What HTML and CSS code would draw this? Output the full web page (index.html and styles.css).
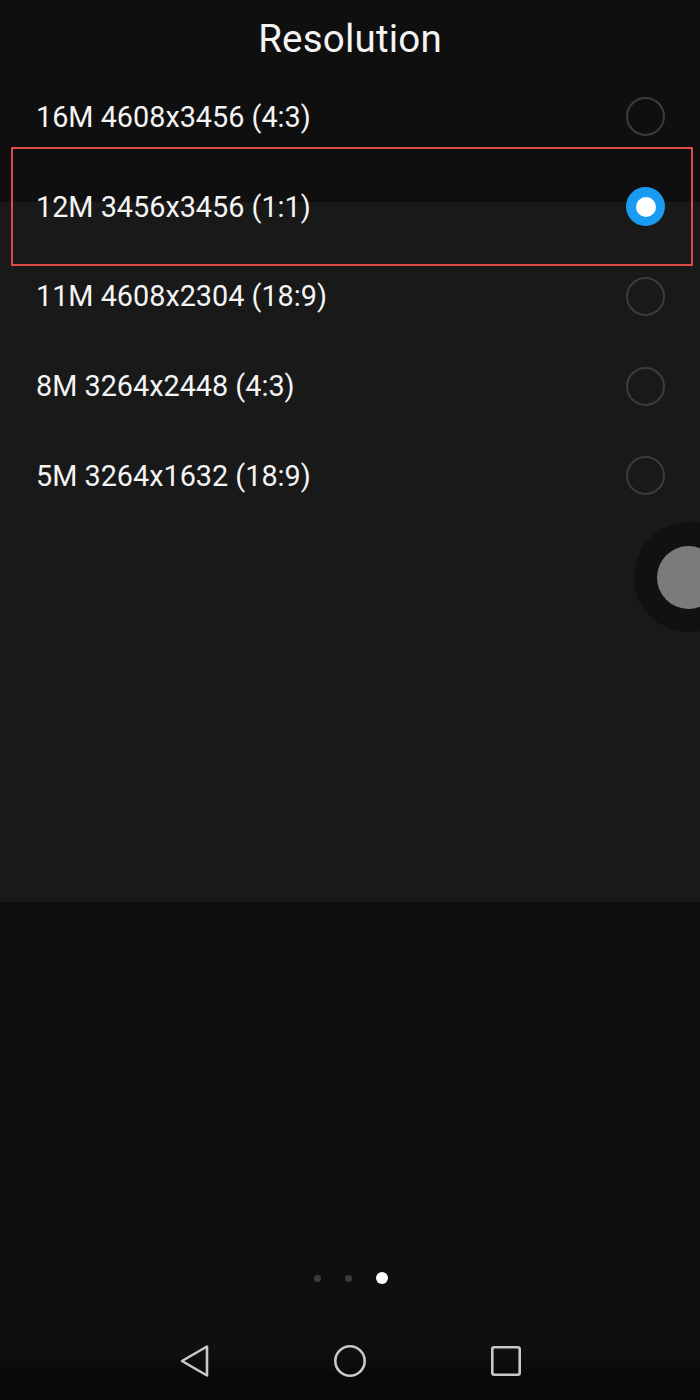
FILE: index.html
```html
<!DOCTYPE html>
<html lang="en">
<head>
<meta charset="utf-8">
<title>Resolution</title>
<link rel="stylesheet" href="styles.css">
</head>
<body>
<div class="screen">
  <header class="header">
    <h1 class="title">Resolution</h1>
  </header>
  <ul class="list">
    <li class="row"><span class="label">16M 4608x3456 (4:3)</span><span class="radio"></span></li>
    <li class="row"><span class="label">12M 3456x3456 (1:1)</span><span class="radio checked"></span></li>
    <li class="row"><span class="label">11M 4608x2304 (18:9)</span><span class="radio"></span></li>
    <li class="row"><span class="label">8M 3264x2448 (4:3)</span><span class="radio"></span></li>
    <li class="row"><span class="label">5M 3264x1632 (18:9)</span><span class="radio"></span></li>
  </ul>
  <div class="highlight"></div>
  <div class="dial"><div class="dial-knob"></div></div>
  <div class="spacer"></div>
  <div class="dots">
    <span class="dot"></span>
    <span class="dot"></span>
    <span class="dot active"></span>
  </div>
  <nav class="navbar">
    <span class="nav-item">
      <svg width="34" height="36" viewBox="0 0 34 36"><path d="M5 18 L30 3.5 L30 32.5 Z" fill="none" stroke="#c9c9c9" stroke-width="2.6" stroke-linejoin="round"/></svg>
    </span>
    <span class="nav-item">
      <svg width="36" height="36" viewBox="0 0 36 36"><circle cx="18" cy="18" r="14.7" fill="none" stroke="#c9c9c9" stroke-width="2.6"/></svg>
    </span>
    <span class="nav-item">
      <svg width="34" height="34" viewBox="0 0 34 34"><rect x="3.3" y="3.3" width="27.4" height="27.4" rx="2" fill="none" stroke="#c9c9c9" stroke-width="2.6"/></svg>
    </span>
  </nav>
</div>
</body>
</html>
```

FILE: styles.css
```css
html, body {
  margin: 0;
  padding: 0;
}
body {
  width: 700px;
  height: 1400px;
  overflow: hidden;
  font-family: Roboto, "Noto Sans", "Liberation Sans", sans-serif;
  color: #f4f4f4;
  background: linear-gradient(to bottom,
    #0f0f0f 0, #0f0f0f 202px,
    #191919 202px, #191919 902px,
    #0f0f0f 902px, #0f0f0f 1356px,
    #090909 1374px, #090909 1400px);
}
.screen {
  position: relative;
  width: 700px;
  height: 1400px;
  overflow: hidden;
  display: flex;
  flex-direction: column;
}
.header {
  height: 72px;
  display: flex;
  align-items: center;
  justify-content: center;
}
.title {
  margin: 4px 0 0;
  font-size: 38.5px;
  font-weight: 400;
  letter-spacing: 0.2px;
}
.list {
  list-style: none;
  margin: 0;
  padding: 0;
}
.row {
  height: 89.75px;
  display: flex;
  align-items: center;
  justify-content: space-between;
  padding: 0 35px 0 36px;
}
.label {
  font-size: 28.8px;
  font-weight: 400;
}
.radio {
  width: 39px;
  height: 39px;
  box-sizing: border-box;
  border: 2px solid #3c3c3c;
  border-radius: 50%;
  display: flex;
  align-items: center;
  justify-content: center;
}
.radio.checked {
  border: none;
  background: #1a9bf2;
}
.radio.checked::after {
  content: "";
  width: 20px;
  height: 20px;
  border-radius: 50%;
  background: #ffffff;
}
.highlight {
  position: absolute;
  left: 11px;
  top: 147px;
  width: 682px;
  height: 119px;
  box-sizing: border-box;
  border: 2px solid #de4a44;
}
.dial {
  position: absolute;
  left: 634px;
  top: 522px;
  width: 110px;
  height: 110px;
  border-radius: 50%;
  background: #111111;
  display: flex;
  align-items: center;
  justify-content: center;
}
.dial-knob {
  width: 63px;
  height: 63px;
  border-radius: 50%;
  background: #7b7b7b;
  margin-left: -1px;
}
.spacer {
  flex: 1;
}
.dots {
  height: 14px;
  display: flex;
  align-items: center;
  justify-content: center;
  gap: 24px;
  padding-left: 1px;
  margin-bottom: 37px;
}
.dot {
  width: 7px;
  height: 7px;
  border-radius: 50%;
  background: #3a3a3a;
}
.dot.active {
  width: 12px;
  height: 12px;
  background: #ffffff;
}
.navbar {
  height: 78px;
  display: flex;
  align-items: center;
  justify-content: center;
  gap: 106px;
}
.nav-item {
  width: 50px;
  height: 40px;
  display: flex;
  align-items: center;
  justify-content: center;
}
```
